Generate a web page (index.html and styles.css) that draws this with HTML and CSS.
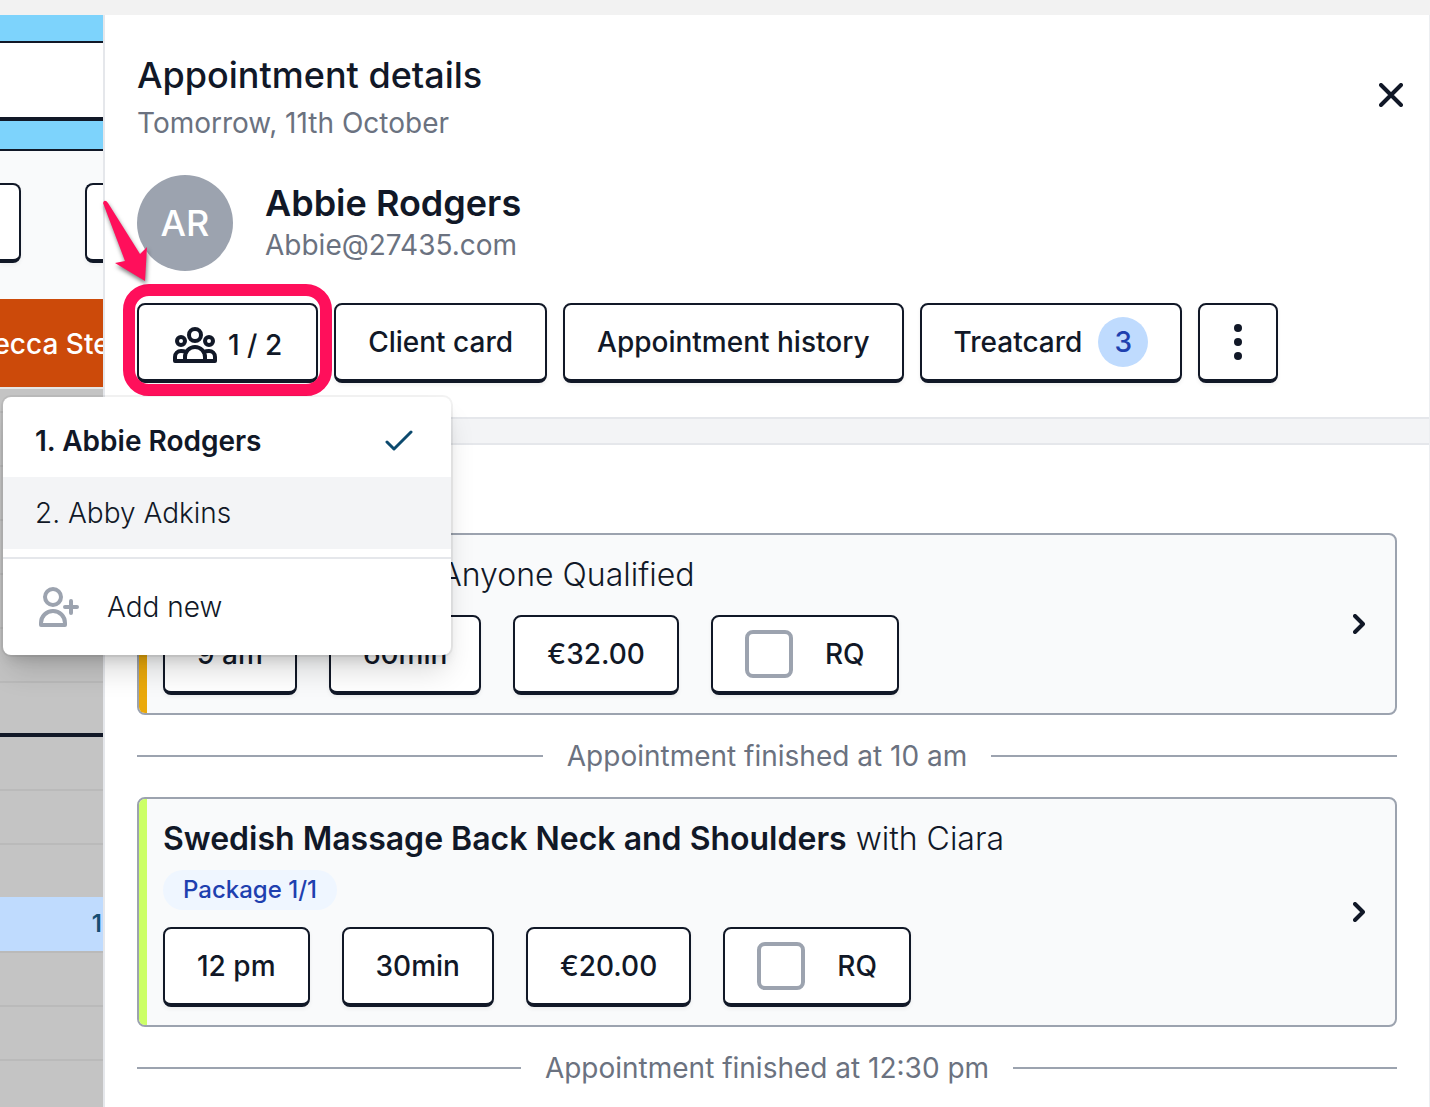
FILE: index.html
```html
<!DOCTYPE html>
<html lang="en">
<head>
<meta charset="utf-8">
<title>Appointment details</title>
<meta name="viewport" content="width=device-width, initial-scale=1">
<link rel="stylesheet" href="styles.css">
</head>
<body>
<div class="topbar"></div>
<div class="layout">
  <aside class="calendar" aria-label="Calendar">
    <div class="cal-stripe cal-stripe-top"></div>
    <div class="cal-nav"></div>
    <div class="cal-stripe"></div>
    <div class="cal-tools">
      <button class="cal-button cal-button-left" type="button" aria-label="Previous"></button>
      <button class="cal-button cal-button-right" type="button" aria-label="Next"></button>
    </div>
    <div class="cal-staff">ecca Ste</div>
    <div class="slot slot-first"></div>
    <div class="slot"></div>
    <div class="slot"></div>
    <div class="slot"></div>
    <div class="slot"></div>
    <div class="slot"></div>
    <div class="slot slot-hour"></div>
    <div class="slot"></div>
    <div class="slot"></div>
    <div class="slot"></div>
    <div class="slot slot-active">1</div>
    <div class="slot"></div>
    <div class="slot"></div>
    <div class="slot slot-rest"></div>
  </aside>

  <main class="panel">
    <header class="panel-head">
      <div class="title-row">
        <div>
          <h1 class="title">Appointment details</h1>
          <p class="muted">Tomorrow, 11th October</p>
        </div>
        <button class="close" type="button" aria-label="Close">
          <svg width="24" height="24" viewBox="0 0 24 24"><path d="M2 2 22 22M22 2 2 22"/></svg>
        </button>
      </div>

      <div class="client">
        <div class="avatar">AR</div>
        <div>
          <h2 class="client-name">Abbie Rodgers</h2>
          <p class="muted">Abbie@27435.com</p>
        </div>
      </div>

      <div class="toolbar">
        <div class="group">
          <button class="button group-button" type="button" aria-haspopup="menu" aria-expanded="true">
            <svg class="group-icon" width="44" height="36" viewBox="0 0 44 36">
              <circle cx="22" cy="8" r="6"/>
              <circle cx="8" cy="14" r="4"/>
              <circle cx="36" cy="14" r="4"/>
              <path d="M12 34v-4a10 10 0 0 1 20 0v4z"/>
              <path d="M12 34H2v-4a6 6 0 0 1 6-6q3 0 5 1M32 34h10v-4a6 6 0 0 0-6-6q-3 0-5 1"/>
            </svg>
            <span>1 / 2</span>
          </button>
          <div class="highlight"></div>
          <svg class="arrow" width="52" height="88" viewBox="0 0 52 88">
            <path d="M2 1Q4 0 6 3L38 54 45 47 43 81 13 63 23 61 1 3Z"/>
          </svg>
          <div class="menu" role="menu">
            <button class="menu-item menu-item-selected" type="button" role="menuitem">
              <span>1. Abbie Rodgers</span>
              <svg class="check" width="28" height="22" viewBox="0 0 28 22"><path d="M2 12 9 19 26 2"/></svg>
            </button>
            <button class="menu-item menu-item-hover" type="button" role="menuitem">2. Abby Adkins</button>
            <button class="menu-item menu-item-add" type="button" role="menuitem">
              <svg class="add-icon" width="40" height="40" viewBox="0 0 40 40">
                <circle cx="14" cy="10" r="8"/>
                <path d="M2 38v-2a12 12 0 0 1 24 0v2zM32 14v12M26 20h12"/>
              </svg>
              <span>Add new</span>
            </button>
          </div>
        </div>
        <button class="button" type="button">Client card</button>
        <button class="button" type="button">Appointment history</button>
        <button class="button" type="button">Treatcard <span class="badge">3</span></button>
        <button class="button button-more" type="button" aria-label="More">
          <svg width="8" height="36" viewBox="0 0 8 36"><circle cx="4" cy="4" r="4"/><circle cx="4" cy="18" r="4"/><circle cx="4" cy="32" r="4"/></svg>
        </button>
      </div>
    </header>
    <div class="band"></div>

    <section class="services">
      <article class="card card-amber">
        <div class="card-body">
          <h3 class="service"><strong>Jet Massage</strong> with Anyone Qualified</h3>
          <div class="options">
            <button class="button" type="button">9 am</button>
            <button class="button" type="button">60min</button>
            <button class="button" type="button">€32.00</button>
            <label class="button request"><input class="box" type="checkbox">RQ</label>
          </div>
        </div>
        <svg class="chevron" width="12" height="20" viewBox="0 0 12 20"><path d="M2 2 10 10 2 18"/></svg>
      </article>
      <p class="divider">Appointment finished at 10 am</p>
      <article class="card card-lime">
        <div class="card-body">
          <h3 class="service"><strong>Swedish Massage Back Neck and Shoulders</strong> with Ciara</h3>
          <span class="pill">Package 1/1</span>
          <div class="options">
            <button class="button" type="button">12 pm</button>
            <button class="button" type="button">30min</button>
            <button class="button" type="button">€20.00</button>
            <label class="button request"><input class="box" type="checkbox">RQ</label>
          </div>
        </div>
        <svg class="chevron" width="12" height="20" viewBox="0 0 12 20"><path d="M2 2 10 10 2 18"/></svg>
      </article>
      <p class="divider divider-last">Appointment finished at 12:30 pm</p>
    </section>
  </main>
</div>
</body>
</html>
```
FILE: styles.css
```css
* { box-sizing: border-box; }

body {
  margin: 0;
  min-height: 100vh;
  display: flex;
  flex-direction: column;
  font: 400 28px/40px Inter, "Liberation Sans", sans-serif;
  color: #111827;
  background: #fff;
}

h1, h2, h3, p { margin: 0; font-weight: 400; }
button { font: inherit; color: inherit; cursor: pointer; }
svg { fill: none; stroke: currentColor; stroke-width: 4; stroke-linecap: round; stroke-linejoin: round; flex: none; }

.topbar { height: 15px; background: #f2f2f2; }
.layout { flex: 1; display: flex; }

/* Calendar behind the panel */
.calendar {
  flex: none;
  width: 103px;
  display: flex;
  flex-direction: column;
  overflow: hidden;
  background: #c4c4c4;
}
.cal-stripe { height: 30px; background: #7dd3fc; border-bottom: 2px solid #111827; }
.cal-stripe-top { height: 28px; }
.cal-nav { height: 78px; background: #fff; border-bottom: 4px solid #111827; }
.cal-tools { height: 148px; padding: 32px 0; display: flex; justify-content: space-between; background: #f9fafb; }
.cal-button {
  height: 80px;
  padding: 0;
  background: #fff;
  border: 2px solid #111827;
  border-bottom-width: 4px;
  box-shadow: 0 2px 4px rgba(0, 0, 0, .05);
}
.cal-button-left { width: 21px; border-left: 0; border-radius: 0 8px 8px 0; }
.cal-button-right { width: 18px; border-right: 0; border-radius: 8px 0 0 8px; }
.cal-staff {
  height: 90px;
  line-height: 90px;
  color: #fff;
  font-weight: 500;
  display: flex;
  justify-content: center;
  white-space: nowrap;
  background: #cc4a0a;
  border-bottom: 2px solid #e5e5e5;
}
.slot { height: 54px; flex: none; border-bottom: 2px solid #bababa; }
.slot-first { height: 24px; }
.slot-hour { border-bottom: 4px solid #111827; }
.slot-active {
  height: 56px;
  margin-top: -2px;
  padding-right: 1px;
  line-height: 54px;
  font-size: 24px;
  font-weight: 600;
  text-align: right;
  color: #164e73;
  background: #bfdbfe;
}
.slot-rest { flex: 1; height: auto; border: 0; }

/* Panel */
.panel { flex: 1; min-width: 0; border-left: 2px solid #e5e7eb; border-right: 1px solid #eceef1; }
.panel-head { padding: 32px 32px 34px; }
.title-row { display: flex; align-items: center; justify-content: space-between; }
.title { font-size: 36px; line-height: 56px; font-weight: 500; }
.muted { color: #6b7280; }
.close { width: 36px; height: 36px; padding: 0; margin-right: -12px; border: 0; background: none; display: grid; place-items: center; }

.client { display: flex; align-items: center; gap: 32px; margin: 32px 0; }
.avatar {
  width: 96px;
  height: 96px;
  border-radius: 50%;
  display: grid;
  place-items: center;
  font-size: 36px;
  font-weight: 500;
  color: #fff;
  background: #9ca3af;
}
.client-name { font-size: 36px; line-height: 44px; font-weight: 600; }

.toolbar { display: flex; gap: 16px; }
.button {
  height: 80px;
  padding: 0 32px;
  display: flex;
  align-items: center;
  font-weight: 500;
  white-space: nowrap;
  background: #fff;
  border: 2px solid #111827;
  border-bottom-width: 4px;
  border-radius: 8px;
  box-shadow: 0 2px 4px rgba(0, 0, 0, .06);
}
.group { position: relative; }
.group-button { gap: 11px; padding: 6px 34px 0; }
.badge {
  width: 50px;
  height: 50px;
  margin-left: 16px;
  border-radius: 50%;
  display: grid;
  place-items: center;
  color: #1e40af;
  background: #bfdbfe;
}
.button-more { width: 80px; padding: 0; justify-content: center; }
.button-more svg { fill: #111827; stroke: none; }

.highlight {
  position: absolute;
  inset: -19px -14px -13px;
  border: 12px solid #ff0f5b;
  border-radius: 26px;
  pointer-events: none;
}
.arrow {
  position: absolute;
  left: -35px;
  top: -103px;
  fill: #ff0f5b;
  stroke: none;
  filter: drop-shadow(1px 3px 2px rgba(0, 0, 0, .5));
  pointer-events: none;
}

.menu {
  position: absolute;
  left: -134px;
  top: 94px;
  z-index: 2;
  width: 448px;
  padding-top: 8px;
  border-radius: 8px;
  overflow: hidden;
  background: #fff;
  box-shadow: 0 0 0 2px rgba(0, 0, 0, .05), 0 20px 30px -6px rgba(0, 0, 0, .16), 0 8px 12px -4px rgba(0, 0, 0, .12);
}
.menu-item {
  width: 100%;
  height: 72px;
  padding: 0 38px 0 32px;
  display: flex;
  align-items: center;
  border: 0;
  background: none;
  font-weight: 300;
  text-align: left;
}
.menu-item-selected { font-weight: 600; justify-content: space-between; }
.menu-item-hover { background: #f3f4f6; }
.menu-item-add { height: 98px; margin-top: 8px; padding-left: 36px; gap: 28px; border-top: 2px solid #e5e7eb; }
.check { color: #0c4a6e; stroke-width: 3; }
.add-icon { color: #9ca3af; }

.band { height: 28px; background: #f3f4f6; border: solid #e5e7eb; border-width: 2px 0; }

/* Services */
.services { padding: 88px 32px 0; }
.card {
  display: flex;
  align-items: center;
  padding-right: 30px;
  overflow: hidden;
  border: 2px solid #9ca3af;
  border-radius: 8px;
  background: #f9fafb;
}
.card-body { flex: 1; padding: 16px 16px 18px; border-left: 8px solid; }
.card-amber .card-body { border-color: #eaa90b; }
.card-lime .card-body { border-color: #ccff66; }
.service { font-size: 32px; line-height: 48px; font-weight: 300; }
.service strong { font-weight: 600; }
.pill {
  display: block;
  width: fit-content;
  margin-top: 7px;
  padding: 0 20px;
  border-radius: 20px;
  font-size: 24px;
  font-weight: 500;
  color: #1e40af;
  background: #eff6ff;
}
.options { display: flex; gap: 32px; margin-top: 16px; }
.pill + .options { margin-top: 17px; }
.request { gap: 32px; }
.box {
  appearance: none;
  width: 48px;
  height: 48px;
  margin: 0;
  border: 4px solid #9ca3af;
  border-radius: 8px;
  background: #fff;
}

.divider { display: flex; align-items: center; gap: 24px; padding: 21px 0; color: #6b7280; }
.divider::before, .divider::after { content: ""; flex: 1; height: 2px; background: #9ca3af; }
.divider-last { padding-bottom: 0; }
```
